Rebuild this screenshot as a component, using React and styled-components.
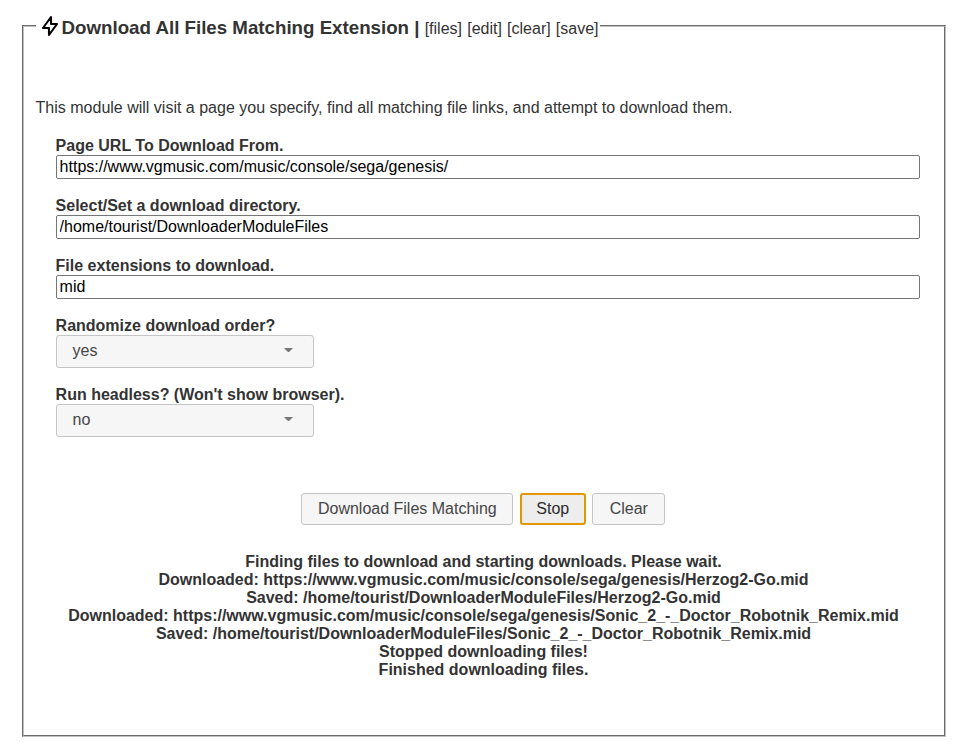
import React from "react";
import styled, { createGlobalStyle } from "styled-components";

const Global = createGlobalStyle`
  *, *::before, *::after { box-sizing: border-box; }
  body {
    margin: 0;
    background: #fff;
    color: #333;
    font: 16px/18px "Liberation Sans", Arial, sans-serif;
  }
`;

const Panel = styled.fieldset`
  margin: 14px 20px 0 22px;
  height: 723px;
  min-width: 0;
  padding: 0 12.6px 0 11.6px;
  border: 2px groove #c0c0c0;
`;

const Legend = styled.legend`
  display: flex;
  align-items: center;
  height: 24px;
  padding: 4px 1px 0 2px;
  white-space: pre;
`;

const Bolt = styled.svg`
  width: 24px;
  height: 24px;
  margin-bottom: 4px;
`;

const Heading = styled.div`
  line-height: 20px;
`;

const Title = styled.b`
  font-size: 18.72px;
`;

const Links = styled.span`
  word-spacing: 0.75px;
`;

const Intro = styled.p`
  margin: 61px 0 20px;
`;

const Form = styled.div`
  padding-left: 20px;
`;

const Field = styled.label`
  display: block;
  height: ${(p) => (p.$tall ? 69 : 60)}px;
  font-weight: bold;
`;

const TextInput = styled.input`
  display: block;
  width: 864px;
  height: 24px;
  padding: 1px 3px;
  border: 1px solid #767676;
  border-radius: 2px;
  color: #000;
  font: 16px "Liberation Sans", Arial, sans-serif;
`;

const Select = styled.div`
  display: flex;
  align-items: center;
  justify-content: space-between;
  width: 258px;
  height: 33px;
  padding: 0 20px 2px 16px;
  border: 1px solid #c5c5c5;
  border-radius: 3px;
  background: #f6f6f6;
  color: #454545;
  font-weight: normal;
`;

const Actions = styled.div`
  display: flex;
  justify-content: center;
  gap: 6.5px;
  margin: 38px 0 28px;
  padding-right: 0.4px;
`;

const Button = styled.button`
  width: ${(p) => p.$width}px;
  height: 32px;
  padding: 0 0 1px;
  border: ${(p) => (p.$active ? "2px solid #e59700" : "1px solid #c5c5c5")};
  border-radius: 3px;
  background: ${(p) => (p.$active ? "#ededed" : "#f6f6f6")};
  color: ${(p) => (p.$active ? "#2b2b2b" : "#454545")};
  font: 16px "Liberation Sans", Arial, sans-serif;
`;

const Log = styled.div`
  text-align: center;
  font-weight: bold;
  white-space: nowrap;
`;

const fields = [
  ["Page URL To Download From.", "https://www.vgmusic.com/music/console/sega/genesis/"],
  ["Select/Set a download directory.", "/home/tourist/DownloaderModuleFiles"],
  ["File extensions to download.", "mid"],
];

const choices = [
  ["Randomize download order?", "yes"],
  ["Run headless? (Won't show browser).", "no"],
];

const messages = [
  "Finding files to download and starting downloads. Please wait.",
  "Downloaded: https://www.vgmusic.com/music/console/sega/genesis/Herzog2-Go.mid",
  "Saved: /home/tourist/DownloaderModuleFiles/Herzog2-Go.mid",
  "Downloaded: https://www.vgmusic.com/music/console/sega/genesis/Sonic_2_-_Doctor_Robotnik_Remix.mid",
  "Saved: /home/tourist/DownloaderModuleFiles/Sonic_2_-_Doctor_Robotnik_Remix.mid",
  "Stopped downloading files!",
  "Finished downloading files.",
];

export default function App() {
  return (
    <>
      <Global />
      <Panel>
        <Legend>
          <Bolt viewBox="0 0 24 24" fill="none" stroke="#000" strokeWidth="2.1" strokeLinejoin="round">
            <path d="M13 3v7h6l-8 11v-7H5l8-11z" />
          </Bolt>
          <Heading>
            <Title>Download All Files Matching Extension | </Title>
            <Links>[files] [edit] [clear] [save]</Links>
          </Heading>
        </Legend>
        <Intro>This module will visit a page you specify, find all matching file links, and attempt to download them.</Intro>
        <Form>
          {fields.map(([label, value]) => (
            <Field key={label}>
              {label}
              <TextInput defaultValue={value} />
            </Field>
          ))}
          {choices.map(([label, value]) => (
            <Field as="div" $tall key={label}>
              {label}
              <Select>
                {value}
                <svg width="9" height="5" viewBox="0 0 9 5" fill="#777">
                  <path d="M0.4 0h8.2v0.5L5 4h-1L0.4 0.5z" />
                </svg>
              </Select>
            </Field>
          ))}
        </Form>
        <Actions>
          <Button $width={212}>Download Files Matching</Button>
          <Button $width={66} $active>Stop</Button>
          <Button $width={73}>Clear</Button>
        </Actions>
        <Log>
          {messages.map((m) => (
            <div key={m}>{m}</div>
          ))}
        </Log>
      </Panel>
    </>
  );
}
